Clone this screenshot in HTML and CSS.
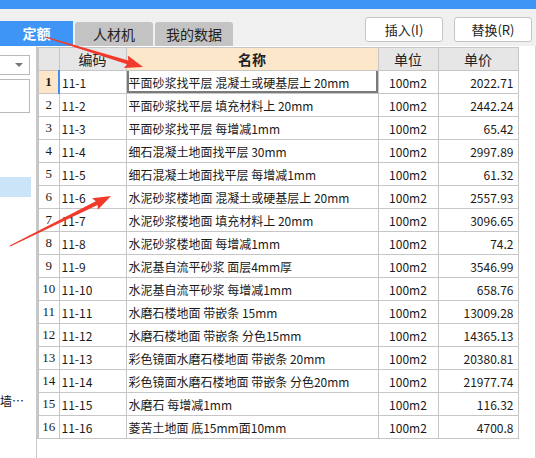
FILE: index.html
```html
<!DOCTYPE html>
<html lang="zh">
  <head>
    <meta charset="utf-8" />
    <title>定额</title>
    <link rel="stylesheet" href="styles.css">
  </head>
  <body>
    <div class="topbar"></div>
    <div class="toolbar">
      <div class="tabs">
        <div class="tab active">定额</div>
        <div class="tab">人材机</div>
        <div class="tab">我的数据</div>
      </div>
      <div class="actions">
        <button class="btn">插入(I)</button>
        <button class="btn">替换(R)</button>
      </div>
    </div>
    <main class="main">
      <aside class="side">
        <div class="combo"><span class="caret"></span></div>
        <div class="search"></div>
        <div class="tree-sel"></div>
        <div class="tree-item">墙…</div>
      </aside>
      <div class="grid-wrap">
        <table class="grid">
          <colgroup>
            <col class="c-no">
            <col class="c-code">
            <col class="c-name">
            <col class="c-unit">
            <col class="c-price">
          </colgroup>
          <thead>
            <tr>
              <th></th>
              <th>编码</th>
              <th class="h-name">名称</th>
              <th>单位</th>
              <th>单价</th>
            </tr>
          </thead>
          <tbody>
            <tr class="current"><td class="no">1</td><td>11-1</td><td class="name cur">平面砂浆找平层 混凝土或硬基层上 20mm</td><td class="unit">100m2</td><td class="price">2022.71</td></tr>
            <tr><td class="no">2</td><td>11-2</td><td class="name">平面砂浆找平层 填充材料上 20mm</td><td class="unit">100m2</td><td class="price">2442.24</td></tr>
            <tr><td class="no">3</td><td>11-3</td><td class="name">平面砂浆找平层 每增减1mm</td><td class="unit">100m2</td><td class="price">65.42</td></tr>
            <tr><td class="no">4</td><td>11-4</td><td class="name">细石混凝土地面找平层 30mm</td><td class="unit">100m2</td><td class="price">2997.89</td></tr>
            <tr><td class="no">5</td><td>11-5</td><td class="name">细石混凝土地面找平层 每增减1mm</td><td class="unit">100m2</td><td class="price">61.32</td></tr>
            <tr><td class="no">6</td><td>11-6</td><td class="name">水泥砂浆楼地面 混凝土或硬基层上 20mm</td><td class="unit">100m2</td><td class="price">2557.93</td></tr>
            <tr><td class="no">7</td><td>11-7</td><td class="name">水泥砂浆楼地面 填充材料上 20mm</td><td class="unit">100m2</td><td class="price">3096.65</td></tr>
            <tr><td class="no">8</td><td>11-8</td><td class="name">水泥砂浆楼地面 每增减1mm</td><td class="unit">100m2</td><td class="price">74.2</td></tr>
            <tr><td class="no">9</td><td>11-9</td><td class="name">水泥基自流平砂浆 面层4mm厚</td><td class="unit">100m2</td><td class="price">3546.99</td></tr>
            <tr><td class="no">10</td><td>11-10</td><td class="name">水泥基自流平砂浆 每增减1mm</td><td class="unit">100m2</td><td class="price">658.76</td></tr>
            <tr><td class="no">11</td><td>11-11</td><td class="name">水磨石楼地面 带嵌条 15mm</td><td class="unit">100m2</td><td class="price">13009.28</td></tr>
            <tr><td class="no">12</td><td>11-12</td><td class="name">水磨石楼地面 带嵌条 分色15mm</td><td class="unit">100m2</td><td class="price">14365.13</td></tr>
            <tr><td class="no">13</td><td>11-13</td><td class="name">彩色镜面水磨石楼地面 带嵌条 20mm</td><td class="unit">100m2</td><td class="price">20380.81</td></tr>
            <tr><td class="no">14</td><td>11-14</td><td class="name">彩色镜面水磨石楼地面 带嵌条 分色20mm</td><td class="unit">100m2</td><td class="price">21977.74</td></tr>
            <tr><td class="no">15</td><td>11-15</td><td class="name">水磨石 每增减1mm</td><td class="unit">100m2</td><td class="price">116.32</td></tr>
            <tr><td class="no">16</td><td>11-16</td><td class="name">菱苦土地面 底15mm面10mm</td><td class="unit">100m2</td><td class="price">4700.8</td></tr>
          </tbody>
        </table>
      </div>
    </main>

    <!-- annotation arrows drawn over the screenshot -->
    <svg class="marks" width="536" height="458" viewBox="0 0 536 458">
      <polygon transform="translate(45 37) rotate(17)" points="0,-0.5 86.5,-2 84.5,-6.5 102.5,0 84.5,6.5 86.5,2 0,0.5" />
      <polygon transform="translate(10 246) rotate(-26.3)" points="0,-0.5 96.7,-2 94.7,-6.5 112.7,0 94.7,6.5 96.7,2 0,0.5" />
    </svg>
  </body>
</html>
```
FILE: styles.css
```css
* {
  box-sizing: border-box;
}

body {
  margin: 0;
  width: 536px;
  height: 458px;
  overflow: hidden;
  position: relative;
  background: #f0f0f0;
  font-family: "Noto Sans CJK SC", "Liberation Sans", sans-serif;
  color: #1a1a1a;
}

.topbar {
  height: 9px;
  background: #3f95f6;
}

.toolbar {
  height: 37px;
  display: flex;
  justify-content: space-between;
}

.tabs {
  display: flex;
  align-items: flex-end;
  gap: 2px;
}

.tab {
  width: 78px;
  height: 24px;
  background: #c3c3c3;
  border-radius: 3px 3px 0 0;
  font-size: 14px;
  line-height: 24px;
  text-align: center;
  color: #222;
}

.tab.active {
  width: 73px;
  height: 25px;
  line-height: 25px;
  border-radius: 0;
  background: #3f95f6;
  color: #fff;
  font-weight: bold;
}

.actions {
  display: flex;
  gap: 11px;
  padding: 8px 4px 0 0;
}

.btn {
  width: 78px;
  height: 25px;
  padding: 0;
  border: 1px solid #c4c4c4;
  border-radius: 3px;
  background: #fff;
  font-family: "Noto Sans CJK SC", sans-serif;
  font-size: 13px;
  color: #222;
}

.main {
  display: flex;
  height: 412px;
}

.side {
  width: 37px;
  background: #fff;
  border-right: 1px solid #c8c8c8;
  position: relative;
  overflow: hidden;
}

.combo {
  position: relative;
  margin: 9px 0 0 -4px;
  width: 34px;
  height: 20px;
  border: 1px solid #b9b9b9;
  background: #fff;
}

.caret {
  position: absolute;
  right: 6px;
  top: 7px;
  border-left: 4px solid transparent;
  border-right: 4px solid transparent;
  border-top: 4px solid #777;
}

.search {
  margin: 4px 0 0 -4px;
  width: 34px;
  height: 34px;
  border: 1px solid #b9b9b9;
}

.tree-sel {
  margin-top: 64px;
  width: 31px;
  height: 20px;
  background: #cce4f7;
}

.tree-item {
  margin-top: 195px;
  font-size: 12px;
  white-space: nowrap;
  color: #111;
}

.grid-wrap {
  flex: 1;
  background: #fff;
  border-right: 1px solid #d4d4d4;
  padding-top: 1px;
}

.grid {
  border-collapse: collapse;
  table-layout: fixed;
  width: 480px;
  font-size: 12px;
  font-family: "Noto Sans CJK SC", "DejaVu Sans", sans-serif;
}

.c-no { width: 21px; }
.c-code { width: 67px; }
.c-name { width: 252px; }
.c-unit { width: 60px; }
.c-price { width: 80px; }

.grid th,
.grid td {
  height: 23px;
  border: 1px solid #c6c6c6;
  padding: 0 2px;
  white-space: nowrap;
  overflow: hidden;
}

.grid th {
  background: #e6e6e6;
  font-weight: normal;
  font-size: 14px;
  text-align: center;
  color: #222;
}

.grid th.h-name {
  background: #fde7cb;
  font-weight: bold;
}

.grid th:first-child,
.grid td:first-child {
  border-left: 2px solid #c6c6c6;
}

.grid td.no {
  text-align: center;
  font-family: "Liberation Serif", serif;
  font-size: 13px;
  padding: 0;
}

.grid .current td.no {
  background: #fde5c8;
  font-weight: bold;
  border-right: 2px solid #3d8ff0;
}

.grid td.cur {
  border-top: 1px solid #3d8ff0;
  box-shadow: inset 2px -2px 0 #7b7b7b, inset -2px 0 0 #7b7b7b;
}

.grid td.unit {
  text-align: center;
}

.grid td.price {
  text-align: right;
  padding-right: 4px;
}

.marks {
  position: absolute;
  left: 0;
  top: 0;
  pointer-events: none;
}

.marks polygon {
  fill: #f23a2c;
}
```
